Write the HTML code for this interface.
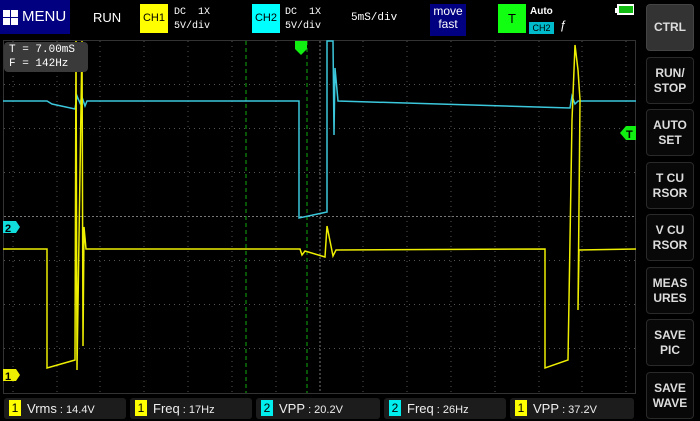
<!DOCTYPE html>
<html><head><meta charset="utf-8"><style>
body{margin:0;width:700px;height:420px;background:#000;overflow:hidden;font-family:"Liberation Sans",sans-serif;position:relative}
.a{position:absolute}
.btn{position:absolute;left:646px;width:46px;height:45px;border:1px solid #2a2a2a;border-radius:4px;background:#080808;color:#ddd;font-size:12px;line-height:15px;text-align:center;display:flex;align-items:center;justify-content:center;font-weight:bold}
.m{position:absolute;top:398px;height:21px;background:#1c1c1c;border-radius:3px;color:#eee;font-size:13px;line-height:21px}
.m b{display:inline-block;width:12px;height:16px;margin:2px 6px 0 5px;vertical-align:top;line-height:16px;text-align:center;color:#000;font-weight:normal;font-size:12px}
.mono{font-family:"Liberation Mono",monospace}
</style></head><body>
<div class="a" style="left:0;top:0;width:70px;height:34px;background:#000080;color:#fff;font-size:15px;line-height:34px">
<svg class="a" style="left:3px;top:10px" width="16" height="16"><rect x="0" y="0" width="7" height="7" fill="#fff"/><rect x="8" y="0" width="7" height="7" fill="#fff"/><rect x="0" y="8" width="7" height="7" fill="#fff"/><rect x="8" y="8" width="7" height="7" fill="#fff"/></svg>
<span class="a" style="left:22px">MENU</span></div>
<div class="a" style="left:93px;top:10px;color:#fff;font-size:13px">RUN</div>
<div class="a" style="left:140px;top:4px;width:28px;height:29px;background:#ff0;color:#000;font-size:11px;line-height:29px;text-align:center">CH1</div>
<div class="a mono" style="left:174px;top:6px;color:#fff;font-size:10px;line-height:14px">DC &nbsp;1X<br>5V/div</div>
<div class="a" style="left:252px;top:4px;width:28px;height:29px;background:#0ff;color:#000;font-size:11px;line-height:29px;text-align:center">CH2</div>
<div class="a mono" style="left:285px;top:6px;color:#fff;font-size:10px;line-height:14px">DC &nbsp;1X<br>5V/div</div>
<div class="a mono" style="left:351px;top:12px;color:#fff;font-size:11px">5mS/div</div>
<div class="a" style="left:430px;top:4px;width:36px;height:31px;background:#000080;color:#fff;font-size:12px;line-height:13px;text-align:center;padding-top:1px">move<br>fast</div>
<div class="a" style="left:498px;top:4px;width:28px;height:29px;background:#1f1;color:#000;font-size:13px;line-height:29px;text-align:center">T</div>
<div class="a" style="left:530px;top:6px;color:#fff;font-size:10px;font-weight:bold">Auto</div>
<div class="a" style="left:529px;top:22px;width:25px;height:12px;background:#0bc;color:#000;font-size:9px;line-height:12px;text-align:center">CH2</div>
<div class="a" style="left:560px;top:18px;color:#fff;font-size:12px">ƒ</div>
<div class="a" style="left:615px;top:5px;width:2px;height:5px;background:#fff;top:8px"></div>
<div class="a" style="left:617px;top:4px;width:17px;height:11px;background:#fff"></div>
<div class="a" style="left:619px;top:6px;width:14px;height:7px;background:#1b1"></div>

<svg class="a" style="left:0;top:0" width="640" height="400">
<rect x="3.5" y="40.5" width="632" height="353" fill="none" stroke="#333"/>
<g stroke="#555" stroke-dasharray="1,4" stroke-width="1">
<path d="M13 41V393M57 41V393M100 41V393M144 41V393M188 41V393M232 41V393M276 41V393M363 41V393M407 41V393M451 41V393M495 41V393M539 41V393M582 41V393M626 41V393"/>
<path d="M4 84.5H636M4 128.5H636M4 172.5H636M4 260.5H636M4 304.5H636M4 348.5H636"/>
</g>
<g stroke="#777" stroke-dasharray="2,2"><path d="M320 41V393M4 216.5H636"/></g>
<g stroke="#1a1" stroke-dasharray="4,3"><path d="M246 41V393M307 41V393"/></g>
<polyline fill="none" stroke="#3cc8dc" stroke-width="1.5" points="3,101 47,101 52,104 75,109 77,96 80,103 82,97 85,106 87,101 299,101 299,218 327,212 327,41 333,41 334,135 335,68 338,101 570,108 572,96 575,104 578,101 636,101"/>
<polyline fill="none" stroke="#ee0" stroke-width="1.5" points="3,249 47,249 47,368 75,360 76,41 77,370 82,41 83,346 84,227 86,249 300,249 302,255 305,251 325,257 327,226 330,241 333,256 336,250 545,249 545,368 568,360 572,120 575,45 578,70 580,100 578,310 579,250 636,249"/>
<path d="M295 41h12v8l-6 6l-6-6z" fill="#1e1"/>
<path d="M620 133l6-7h10v14h-10z" fill="#1e1"/><text x="626" y="138" font-size="11" font-weight="bold" fill="#000" font-family="Liberation Sans">T</text>
<path d="M3 221h13l4 6l-4 6h-13z" fill="#1dd"/><text x="5" y="232" font-size="11" font-weight="bold" fill="#000" font-family="Liberation Sans">2</text>
<path d="M3 369h13l4 6l-4 6h-13z" fill="#ee0"/><text x="5" y="380" font-size="11" font-weight="bold" fill="#000" font-family="Liberation Sans">1</text>
</svg>
<div class="a mono" style="left:4px;top:42px;width:84px;height:30px;background:#3a3a3a;border-radius:4px;color:#fff;font-size:11px;line-height:14px;padding-left:5px;box-sizing:border-box;padding-top:1px">T = 7.00mS<br>F = 142Hz</div>

<div class="btn" style="top:4px;background:#333;border-color:#444">CTRL</div>
<div class="btn" style="top:57px">RUN/<br>STOP</div>
<div class="btn" style="top:109px">AUTO<br>SET</div>
<div class="btn" style="top:162px">T CU<br>RSOR</div>
<div class="btn" style="top:214px">V CU<br>RSOR</div>
<div class="btn" style="top:267px">MEAS<br>URES</div>
<div class="btn" style="top:319px">SAVE<br>PIC</div>
<div class="btn" style="top:372px">SAVE<br>WAVE</div>

<div class="m" style="left:4px;width:122px"><b style="background:#ff0">1</b>Vrms<span style="font-size:11px"> : 14.4V</span></div>
<div class="m" style="left:130px;width:122px"><b style="background:#ff0">1</b>Freq<span style="font-size:11px"> : 17Hz</span></div>
<div class="m" style="left:256px;width:124px"><b style="background:#0ee">2</b>VPP<span style="font-size:11px"> : 20.2V</span></div>
<div class="m" style="left:384px;width:122px"><b style="background:#0ee">2</b>Freq<span style="font-size:11px"> : 26Hz</span></div>
<div class="m" style="left:510px;width:124px"><b style="background:#ff0">1</b>VPP<span style="font-size:11px"> : 37.2V</span></div>
</body></html>
